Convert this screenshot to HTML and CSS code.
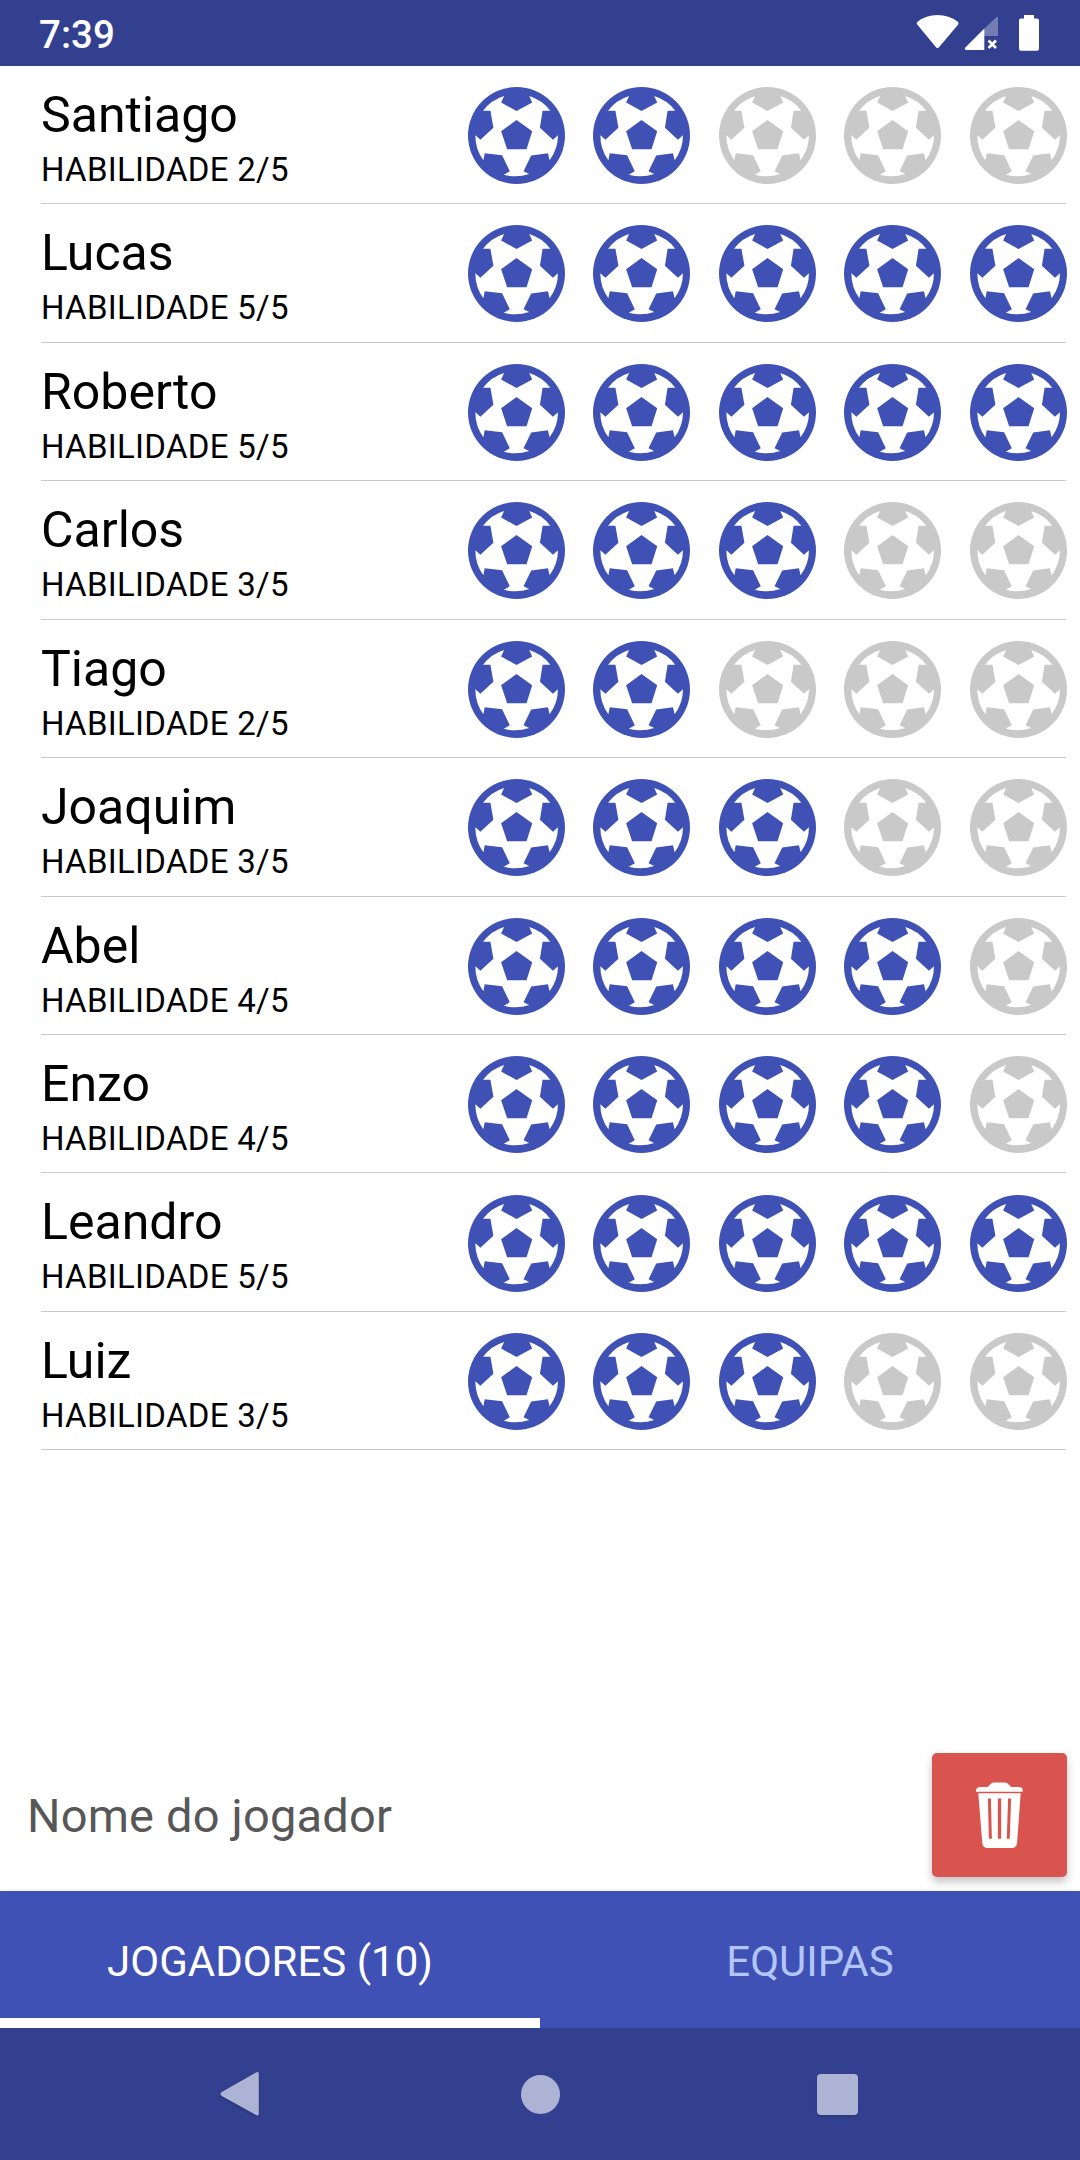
FILE: index.html
```html
<!DOCTYPE html>
<html lang="pt">
<head>
    <meta charset="UTF-8" />
    <meta name="viewport" content="width=device-width, initial-scale=1.0" />
    <title>Jogadores</title>
    <link rel="stylesheet" href="styles.css">
</head>
<body>
    <svg class="sprite" xmlns="http://www.w3.org/2000/svg">
        <symbol id="ball" viewBox="39 36 290 290">
            <circle cx="184" cy="181" r="145" />
            <path fill="#fff" fill-rule="evenodd" d="M147 63L138 82L184 108L231 82L222 63A124 124 0 0 1 285 107L262 107L254 158L293 194L308 180A124 124 0 0 1 283 255L278 234L228 241L205 288L222 296A124 124 0 0 1 146 298L164 288L141 240L89 234L85 255A124 124 0 0 1 61 180L76 194L115 158L106 107L84 107A124 124 0 0 1 147 63ZM184 135L138 168L156 222L214 222L231 168Z" />
        </symbol>
    </svg>

    <div class="screen">
        <header class="status-bar">
            <span class="clock">7:39</span>
            <svg class="status-icons" viewBox="910 0 140 66">
                <path d="M917.2 24.6Q916 23 917.5 21.7Q926 15 937.5 15T957.8 21.7Q959.3 23 958.2 24.6L939 47.2Q937.5 49 936 47.2Z" />
                <path class="faded" d="M984 29L996 17.5Q998 16 998 18V36H984Z" />
                <path d="M984.3 28.5V50H966.5Q964 49.500 965.300 47.500Z" />
                <path class="cross" d="M988.500 40.500L996 48M996 40.500L988.500 48" />
                <path d="M1024 15H1034V18.500H1037Q1039 18.500 1039 20.500V48.500Q1039 50.800 1037 50.800H1021Q1019 50.800 1019 48.500V20.500Q1019 18.500 1021 18.500H1024Z" />
            </svg>
        </header>

        <main class="content">
            <ul class="players">
                <li class="player">
                    <div class="info">
                        <h2 class="name">Santiago</h2>
                        <p class="skill">HABILIDADE 2/5</p>
                    </div>
                    <div class="rating">
                        <svg class="ball on"><use href="#ball" /></svg>
                        <svg class="ball on"><use href="#ball" /></svg>
                        <svg class="ball"><use href="#ball" /></svg>
                        <svg class="ball"><use href="#ball" /></svg>
                        <svg class="ball"><use href="#ball" /></svg>
                    </div>
                </li>
                <li class="player">
                    <div class="info">
                        <h2 class="name">Lucas</h2>
                        <p class="skill">HABILIDADE 5/5</p>
                    </div>
                    <div class="rating">
                        <svg class="ball on"><use href="#ball" /></svg>
                        <svg class="ball on"><use href="#ball" /></svg>
                        <svg class="ball on"><use href="#ball" /></svg>
                        <svg class="ball on"><use href="#ball" /></svg>
                        <svg class="ball on"><use href="#ball" /></svg>
                    </div>
                </li>
                <li class="player">
                    <div class="info">
                        <h2 class="name">Roberto</h2>
                        <p class="skill">HABILIDADE 5/5</p>
                    </div>
                    <div class="rating">
                        <svg class="ball on"><use href="#ball" /></svg>
                        <svg class="ball on"><use href="#ball" /></svg>
                        <svg class="ball on"><use href="#ball" /></svg>
                        <svg class="ball on"><use href="#ball" /></svg>
                        <svg class="ball on"><use href="#ball" /></svg>
                    </div>
                </li>
                <li class="player">
                    <div class="info">
                        <h2 class="name">Carlos</h2>
                        <p class="skill">HABILIDADE 3/5</p>
                    </div>
                    <div class="rating">
                        <svg class="ball on"><use href="#ball" /></svg>
                        <svg class="ball on"><use href="#ball" /></svg>
                        <svg class="ball on"><use href="#ball" /></svg>
                        <svg class="ball"><use href="#ball" /></svg>
                        <svg class="ball"><use href="#ball" /></svg>
                    </div>
                </li>
                <li class="player">
                    <div class="info">
                        <h2 class="name">Tiago</h2>
                        <p class="skill">HABILIDADE 2/5</p>
                    </div>
                    <div class="rating">
                        <svg class="ball on"><use href="#ball" /></svg>
                        <svg class="ball on"><use href="#ball" /></svg>
                        <svg class="ball"><use href="#ball" /></svg>
                        <svg class="ball"><use href="#ball" /></svg>
                        <svg class="ball"><use href="#ball" /></svg>
                    </div>
                </li>
                <li class="player">
                    <div class="info">
                        <h2 class="name">Joaquim</h2>
                        <p class="skill">HABILIDADE 3/5</p>
                    </div>
                    <div class="rating">
                        <svg class="ball on"><use href="#ball" /></svg>
                        <svg class="ball on"><use href="#ball" /></svg>
                        <svg class="ball on"><use href="#ball" /></svg>
                        <svg class="ball"><use href="#ball" /></svg>
                        <svg class="ball"><use href="#ball" /></svg>
                    </div>
                </li>
                <li class="player">
                    <div class="info">
                        <h2 class="name">Abel</h2>
                        <p class="skill">HABILIDADE 4/5</p>
                    </div>
                    <div class="rating">
                        <svg class="ball on"><use href="#ball" /></svg>
                        <svg class="ball on"><use href="#ball" /></svg>
                        <svg class="ball on"><use href="#ball" /></svg>
                        <svg class="ball on"><use href="#ball" /></svg>
                        <svg class="ball"><use href="#ball" /></svg>
                    </div>
                </li>
                <li class="player">
                    <div class="info">
                        <h2 class="name">Enzo</h2>
                        <p class="skill">HABILIDADE 4/5</p>
                    </div>
                    <div class="rating">
                        <svg class="ball on"><use href="#ball" /></svg>
                        <svg class="ball on"><use href="#ball" /></svg>
                        <svg class="ball on"><use href="#ball" /></svg>
                        <svg class="ball on"><use href="#ball" /></svg>
                        <svg class="ball"><use href="#ball" /></svg>
                    </div>
                </li>
                <li class="player">
                    <div class="info">
                        <h2 class="name">Leandro</h2>
                        <p class="skill">HABILIDADE 5/5</p>
                    </div>
                    <div class="rating">
                        <svg class="ball on"><use href="#ball" /></svg>
                        <svg class="ball on"><use href="#ball" /></svg>
                        <svg class="ball on"><use href="#ball" /></svg>
                        <svg class="ball on"><use href="#ball" /></svg>
                        <svg class="ball on"><use href="#ball" /></svg>
                    </div>
                </li>
                <li class="player">
                    <div class="info">
                        <h2 class="name">Luiz</h2>
                        <p class="skill">HABILIDADE 3/5</p>
                    </div>
                    <div class="rating">
                        <svg class="ball on"><use href="#ball" /></svg>
                        <svg class="ball on"><use href="#ball" /></svg>
                        <svg class="ball on"><use href="#ball" /></svg>
                        <svg class="ball"><use href="#ball" /></svg>
                        <svg class="ball"><use href="#ball" /></svg>
                    </div>
                </li>
            </ul>
        </main>

        <form class="add-player">
            <input class="player-input" type="text" placeholder="Nome do jogador" />
            <button class="delete" type="button">
                <svg class="trash" viewBox="228 155 142 199">
                    <path d="M228 184V178Q230 171 240 170H263L273 160Q277 156 283 156H314Q320 156 324 160L335 170H357Q368 171 369 178V184Z" />
                    <path fill-rule="evenodd" d="M235 189H363L352 340Q350 353 339 354H260Q249 353 247 340ZM264 205L267 326H276L273 205ZM294 205V326H304V205ZM325 205L321 326H330L334 205Z" />
                </svg>
            </button>
        </form>

        <nav class="tabs">
            <a class="tab active">JOGADORES (10)</a>
            <a class="tab">EQUIPAS</a>
        </nav>

        <footer class="nav-bar">
            <svg class="nav-icon back" viewBox="0 0 40 46"><path d="M36 1.500Q38.800 0 38.800 3V42.500Q38.800 45.500 36 44L1.800 25Q-.8 23 1.800 21Z" /></svg>
            <span class="nav-icon home"></span>
            <span class="nav-icon recent"></span>
        </footer>
    </div>
</body>
</html>
```
FILE: styles.css
```css
* { box-sizing: border-box; }
body { margin: 0; font-family: Roboto, sans-serif; background: #fff; }
.sprite { display: none; }
.screen { display: flex; flex-direction: column; width: 1080px; height: 2160px; overflow: hidden; }

/* status bar */
.status-bar { display: flex; flex: none; align-items: center; justify-content: space-between; height: 66px; padding: 0 30px 0 39px; background: #32408f; color: #fff; }
.clock { font-size: 38.5px; font-weight: 500; line-height: 45px; margin-top: 3px; }
.status-icons { width: 140px; height: 66px; fill: #fff; }
.faded { fill-opacity: .32; }
.cross { stroke: #fff; stroke-width: 2.6; }

/* players list */
.content { flex: 1; min-height: 0; }
.players { list-style: none; margin: -.1px 14px 0 41px; padding: 0; }
.player { display: flex; justify-content: space-between; height: 138.45px; border-bottom: 1px solid #c9c9c9; }
.name { margin: 20px 0 0; font-size: 50px; line-height: 58px; font-weight: 400; color: #000; }
.skill { margin: 6px 0 0; font-size: 33px; line-height: 39px; letter-spacing: .28px; color: #000; }
.rating { display: flex; gap: 28.6px; margin: 21.1px -1px 0 0; }
.ball { width: 97px; height: 97px; fill: #c9c9c9; }
.ball.on { fill: #3f51b5; }

/* new player field */
.add-player { display: flex; flex: none; height: 138px; padding: 0 13px 14px 27px; }
.player-input { flex: 1; min-width: 0; height: 124px; padding: 0; border: 0; outline: 0; background: none; font: 400 47px/56px Roboto, sans-serif; letter-spacing: .18px; }
.player-input::placeholder { color: #575757; opacity: 1; }
.delete { display: flex; align-items: center; justify-content: center; width: 135px; height: 124px; padding: 0; border: 0; border-radius: 5px; background: #d9534f; box-shadow: 0 5px 8px rgba(0, 0, 0, .24); }
.trash { width: 47px; height: 66px; fill: #fff; }

/* tabs */
.tabs { display: flex; flex: none; height: 137px; background: #3f51b5; box-shadow: 0 0 4px rgba(0, 0, 0, .1); }
.tab { flex: 1; height: 137px; padding-top: 46px; border-bottom: 10px solid transparent; font-size: 42px; line-height: 50px; text-align: center; color: #b3c6fa; }
.tab.active { border-color: #fff; color: #fff; }

/* android buttons */
.nav-bar { display: flex; flex: none; align-items: center; height: 132px; padding-left: 220px; background: #32408f; }
.nav-icon { background: #adb3d5; }
.back { width: 40px; height: 46px; background: none; fill: #adb3d5; filter: drop-shadow(0 2px 1px rgba(0, 0, 0, .15)); }
.home { width: 39px; height: 39px; margin-left: 261px; border-radius: 50%; }
.recent { width: 41px; height: 41px; margin-left: 257px; border-radius: 4px; box-shadow: 0 2px 2px rgba(0, 0, 0, .15); }
```
